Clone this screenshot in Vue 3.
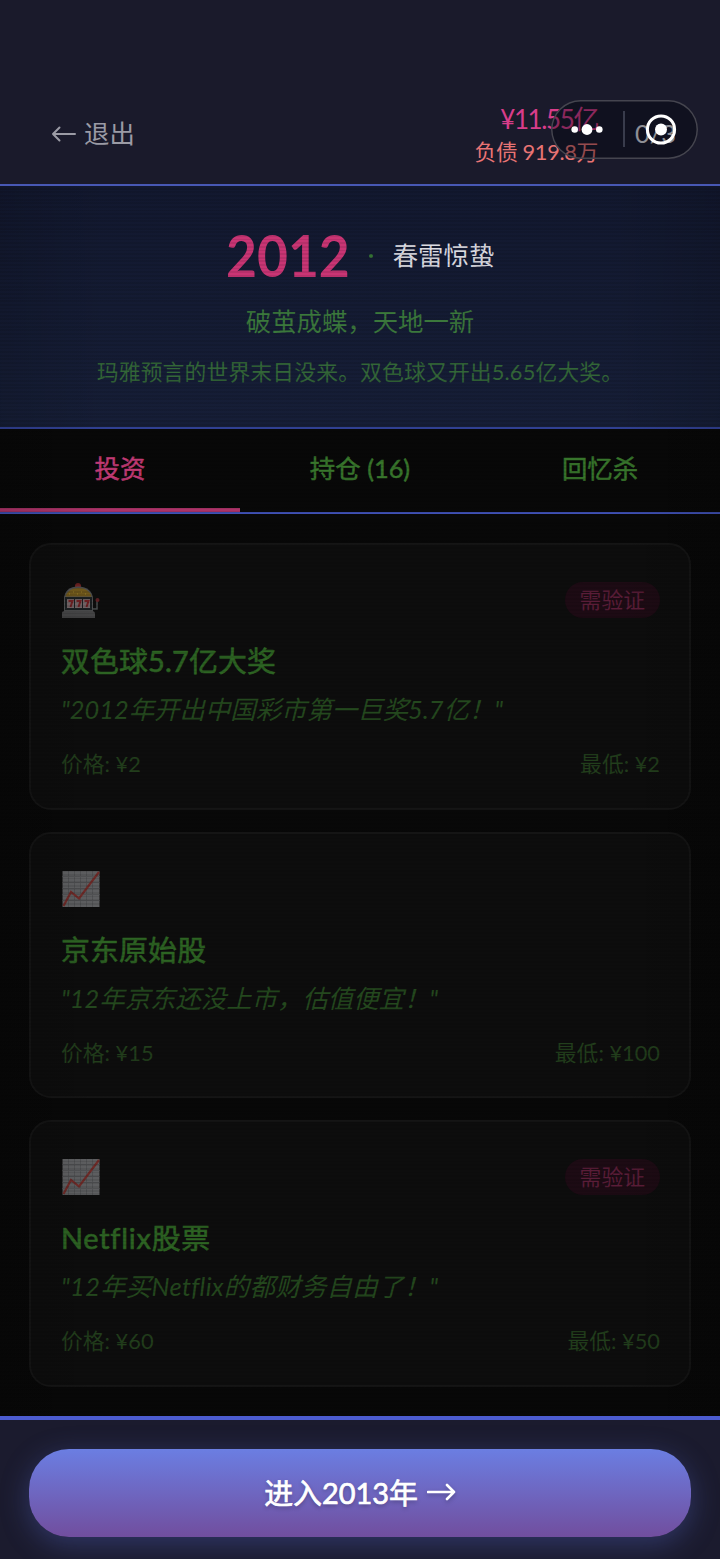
<script setup>
const tabs = ['投资', '持仓 (16)', '回忆杀']
const cards = [
  { icon: 'slot', badge: '需验证', title: '双色球5.7亿大奖', quote: '"2012年开出中国彩市第一巨奖5.7亿！"', price: '¥2', min: '¥2' },
  { icon: 'chart', title: '京东原始股', quote: '"12年京东还没上市，估值便宜！"', price: '¥15', min: '¥100' },
  { icon: 'chart', badge: '需验证', title: 'Netflix股票', quote: '"12年买Netflix的都财务自由了！"', price: '¥60', min: '¥50', wide: true },
]
</script>

<template>
  <div class="page">
    <header class="top">
      <div class="back">
        <svg width="26" height="20" viewBox="0 0 26 20" class="stroke"><path d="M8.500 4.500 2 11l6.500 6.500M2 11h22" /></svg>
        <span>退出</span>
      </div>
      <div class="money">
        <div class="cash">¥11.55亿</div>
        <div class="debt">负债 919.8万</div>
      </div>
      <div class="count">0/3</div>
      <div class="capsule">
        <svg width="147" height="58" viewBox="0 0 147 58">
          <g fill="#fff"><circle cx="23.700" cy="29.500" r="3.300" /><circle cx="36" cy="29.500" r="5.400" /><circle cx="48.300" cy="29.500" r="3.300" /><circle cx="110" cy="29.500" r="6" /></g>
          <path d="M73 11v36" stroke="#474b5c" stroke-width="1.500" />
          <circle cx="110" cy="29.500" r="13.600" fill="none" stroke="#fff" stroke-width="3" />
        </svg>
      </div>
    </header>

    <div class="body">
      <section class="hero">
        <div class="yearline">
          <span class="yearbox"><b class="year">2012</b></span><i class="dot"></i><span class="theme">春雷惊蛰</span>
        </div>
        <div class="motto">破茧成蝶，天地一新</div>
        <div class="news">玛雅预言的世界末日没来。双色球又开出5.65亿大奖。</div>
      </section>

      <nav class="tabs">
        <div v-for="(t, i) in tabs" :key="t" class="tab" :class="{ active: i === 0 }"><span>{{ t }}</span></div>
      </nav>

      <main class="list">
        <article v-for="c in cards" :key="c.title" class="card" :class="{ wide: c.wide }">
          <div class="cardhead">
            <svg v-if="c.icon === 'slot'" class="emoji" width="38" height="38" viewBox="0 0 38 38">
              <circle cx="16" cy="4" r="3" fill="#6d2222" />
              <path d="M2 31V17C2 9 8 4.500 16 4.500S31 9 31 17v14z" fill="#505152" />
              <path d="M3.500 14.500C5 9 10 6 16.500 6S28 9 29.500 14.500z" fill="#71591c" />
              <path d="M7 12h1m3-2h1m3 2h1m3-2h1m3 2h1" stroke="#8d7424" stroke-width="1.500" />
              <rect x="3" y="15" width="27" height="13" fill="#1b2022" />
              <path d="M5 17h7v9H5zM13 17h7v9h-7zM21 17h7v9h-7z" fill="#736466" />
              <path d="M6.500 19h4l-2 6M14.500 19h4l-2 6M22.500 19h4l-2 6" fill="none" stroke="#6e2023" stroke-width="2" />
              <path d="M0 31q0-2 3-2h27q3 0 3 3v4H0z" fill="#454546" />
              <path d="M31 27h4v-8" fill="none" stroke="#4a4e4f" stroke-width="1.500" />
              <circle cx="35.500" cy="18" r="2" fill="#5f2024" />
            </svg>
            <svg v-else class="emoji chart" width="38" height="38" viewBox="0 0 38 38">
              <path d="M.5 1h37v36H.5z" fill="#5e5f61" />
              <path d="M6.500 1v36M12.500 1v36M18.500 1v36M24.500 1v36M30.500 1v36M.5 6.500h37M.5 12.500h37M.5 18.500h37M.5 24.500h37M.5 30.500h37" stroke="#515254" stroke-width="1" />
              <path d="M1.500 36 9 22l8 6.500L37 2" fill="none" stroke="#702b28" stroke-width="2.200" />
            </svg>
            <span v-if="c.badge" class="badge">{{ c.badge }}</span>
          </div>
          <div class="title">{{ c.title }}</div>
          <div class="quote">{{ c.quote }}</div>
          <div class="prices"><span>价格: {{ c.price }}</span><span>最低: {{ c.min }}</span></div>
        </article>
      </main>
      <div class="scan"></div>
    </div>

    <footer class="bottom">
      <div class="next">
        <span>进入2013年</span>
        <svg width="29" height="22" viewBox="0 0 29 22" class="stroke bold"><path d="M1 12h26M20 5l7 7-7 7" /></svg>
      </div>
    </footer>
  </div>
</template>

<style>
body { background: #060606; }
</style>

<style scoped>
.page {
  height: 1559px;
  display: flex;
  flex-direction: column;
  overflow: hidden;
  background: #080808;
  font-family: Lato, "Noto Sans CJK SC", sans-serif;
  box-sizing: border-box;
}
.page * { box-sizing: border-box; }
.stroke { fill: none; stroke: currentColor; stroke-width: 2; stroke-linecap: round; stroke-linejoin: round; }
.bold { stroke-width: 2.6; }

.top {
  position: relative;
  height: 186px;
  flex: none;
  padding: 82px 44px 0 51px;
  display: flex;
  align-items: center;
  background: #1a1a2b;
  border-bottom: 2px solid #4858b4;
}
.back { display: flex; align-items: center; gap: 7px; color: #9b9ba5; font-size: 25.400px; line-height: 36px; }
.money { margin-left: auto; padding-top: 5px; text-align: right; display: flex; flex-direction: column; }
.cash { font-size: 26px; line-height: 33px; color: #d83d8a; letter-spacing: -1.400px; margin-right: -1px; }
.debt { font-size: 21.800px; line-height: 32px; color: #e87474; letter-spacing: -.35px; margin-right: -1px; }
.count { margin-left: 38px; width: 41px; font-size: 25.400px; line-height: 36px; color: #dedee2; }
.capsule {
  position: absolute;
  left: 551px;
  top: 100px;
  width: 147px;
  height: 59px;
  border-radius: 30px;
  background: rgba(0, 3, 12, .36);
  box-shadow: inset 0 0 0 1.500px #45454f;
}
.capsule svg { display: block; }

.body { position: relative; flex: 1; min-height: 0; }
.scan {
  position: absolute;
  inset: 0;
  pointer-events: none;
  background:
    repeating-linear-gradient(rgba(0, 0, 0, 0) 0 1.800px, rgba(0, 0, 0, .09) 1.800px 3.630px),
    linear-gradient(90deg, rgba(0, 0, 0, .12), rgba(0, 0, 0, 0) 15%, rgba(0, 0, 0, 0) 85%, rgba(0, 0, 0, .12));
}

.hero {
  height: 243px;
  padding-top: 35px;
  display: flex;
  flex-direction: column;
  align-items: center;
  background: linear-gradient(#12182f, #161e37);
  border-bottom: 2px solid #3546a0;
}
.yearline { display: flex; align-items: center; height: 68px; }
.yearbox { width: 123px; }
.year { display: inline-block; font-size: 58px; font-weight: 700; line-height: 68px; color: #c93574; transform: scaleX(.92); transform-origin: 0 50%; }
.dot { width: 4px; height: 4px; margin: 2px 20px 0; border-radius: 50%; background: #347034; }
.theme { font-size: 25.400px; color: #dcdce2; position: relative; top: -1px; }
.motto { margin-top: 13px; font-size: 25.400px; line-height: 38px; color: #3b783c; }
.news { margin-top: 16px; font-size: 21.800px; line-height: 32px; letter-spacing: .15px; color: #336638; }

.tabs { height: 85px; display: grid; grid-template-columns: repeat(3, 1fr); background: #080808; border-bottom: 2px solid #3f50b4; }
.tab { display: flex; justify-content: center; padding-top: 20px; font-size: 25.400px; line-height: 38px; color: #38762c; -webkit-text-stroke: .5px currentColor; }
.active { color: #c23a75; border-bottom: 4px solid #ac3368; }

.list { padding: 29px 29px 0; display: flex; flex-direction: column; gap: 22px; }
.card { height: 266.600px; padding: 36px 29px 0 30px; border: 2px solid #151515; border-radius: 22px; background: #0d0d0d; }
.cardhead { display: flex; justify-content: space-between; height: 56px; }
.emoji { display: block; margin-top: 1px; margin-left: 1px; }
.chart { margin-top: 0; }
.badge { height: 36px; margin-top: 1px; padding: 0 15px; border-radius: 18px; background: #1d0b14; color: #5a1d38; font-size: 21.800px; line-height: 35px; }
.title { margin-top: 3px; font-size: 28.900px; line-height: 42px; letter-spacing: .15px; color: #2d6423; -webkit-text-stroke: .6px currentColor; }
.quote { margin-top: 9px; font-size: 25.400px; line-height: 36px; font-style: italic; color: #24481e; }
.wide .title { letter-spacing: .75px; }
.wide .quote { letter-spacing: .3px; }
.prices { margin-top: 20px; display: flex; justify-content: space-between; font-size: 21.800px; line-height: 34px; color: #223e1c; }

.bottom { height: 143px; flex: none; padding: 29px 29px 0; background: #1b1b2e; border-top: 4px solid #4c5cd0; }
.next {
  height: 88px;
  padding-bottom: 5px;
  border-radius: 40px;
  display: flex;
  align-items: center;
  justify-content: center;
  gap: 9px;
  color: #fff;
  font-size: 28.900px;
  background: linear-gradient(#6b7ee2, #714e9e);
  box-shadow: 0 7px 28px rgba(87, 105, 205, .36);
  -webkit-text-stroke: .7px currentColor;
  text-shadow: 0 2px 4px rgba(0, 0, 0, .3);
}
.next svg { filter: drop-shadow(0 2px 2px rgba(0, 0, 0, .25)); }
</style>
